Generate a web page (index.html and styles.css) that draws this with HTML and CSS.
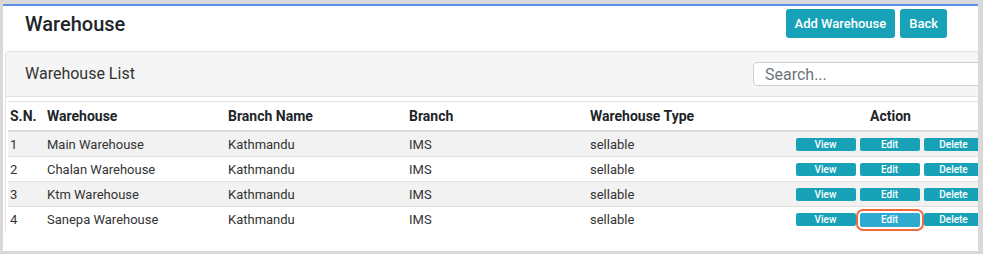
FILE: index.html
```html
<!DOCTYPE html>
<html>
<head>
<meta charset="utf-8">
<link rel="stylesheet" href="styles.css">
</head>
<body>
<div class="frame">
  <div class="page">
    <div class="page-head">
      <h1 class="title">Warehouse</h1>
      <div class="head-actions">
        <button class="btn">Add Warehouse</button>
        <button class="btn">Back</button>
      </div>
    </div>
    <div class="card">
      <div class="card-head">
        <span class="card-title">Warehouse List</span>
        <input class="search" type="text" placeholder="Search...">
      </div>
      <div class="card-body">
        <table class="grid">
          <colgroup>
            <col class="c-sn"><col class="c-mid"><col class="c-mid"><col class="c-mid"><col class="c-mid"><col class="c-act">
          </colgroup>
          <thead>
            <tr><th>S.N.</th><th>Warehouse</th><th>Branch Name</th><th>Branch</th><th>Warehouse Type</th><th class="center">Action</th></tr>
          </thead>
          <tbody>
            <tr><td>1</td><td>Main Warehouse</td><td>Kathmandu</td><td>IMS</td><td>sellable</td><td class="acts"><span class="sb">View</span><span class="sb">Edit</span><span class="sb">Delete</span></td></tr>
            <tr><td>2</td><td>Chalan Warehouse</td><td>Kathmandu</td><td>IMS</td><td>sellable</td><td class="acts"><span class="sb">View</span><span class="sb">Edit</span><span class="sb">Delete</span></td></tr>
            <tr><td>3</td><td>Ktm Warehouse</td><td>Kathmandu</td><td>IMS</td><td>sellable</td><td class="acts"><span class="sb">View</span><span class="sb">Edit</span><span class="sb">Delete</span></td></tr>
            <tr><td>4</td><td>Sanepa Warehouse</td><td>Kathmandu</td><td>IMS</td><td>sellable</td><td class="acts"><span class="sb">View</span><span class="ring"><span class="sb hot">Edit</span></span><span class="sb">Delete</span></td></tr>
          </tbody>
        </table>
      </div>
    </div>
  </div>
</div>
</body>
</html>
```
FILE: styles.css
```css
html, body {
  margin: 0;
  padding: 0;
  background: #d9d9d9;
  font-family: Roboto, "Liberation Sans", sans-serif;
  color: #333;
}
.frame {
  margin: 4px 0 0 3px;
  width: 975px;
  height: 245px;
  background: #fff;
  border-top: 2px solid #5d8fe8;
  overflow: hidden;
}
.page {
  width: 1040px;
}
.page-head {
  width: 975px;
  box-sizing: border-box;
  height: 45px;
  display: flex;
  justify-content: space-between;
  align-items: flex-start;
  padding: 3px 31px 0 22px;
}
.title {
  margin: 2px 0 0;
  font-size: 20px;
  font-weight: 500;
  color: #212529;
  line-height: 26px;
}
.head-actions {
  display: flex;
  gap: 5px;
}
.btn {
  height: 29px;
  padding: 0 9px;
  border: 0;
  border-radius: 3px;
  background: #18a2b7;
  color: #fff;
  font-family: Roboto, "Liberation Sans", sans-serif;
  font-size: 13px;
  font-weight: 500;
}
.card {
  margin-left: 2px;
  width: 1020px;
  border-top: 1px solid #e2e2e2;
  border-left: 1px solid #e2e2e2;
  border-radius: 4px 0 0 0;
}
.card-head {
  height: 44px;
  display: flex;
  align-items: center;
  justify-content: space-between;
  background: #f5f5f5;
  border-bottom: 1px solid #e3e3e3;
  padding: 0 20px 0 19px;
}
.card-title {
  font-size: 16px;
  color: #333;
  margin-top: -2px;
}
.search {
  width: 248px;
  height: 24px;
  box-sizing: border-box;
  border: 1px solid #cfcfcf;
  border-radius: 4px;
  padding: 0 11px;
  font-family: Roboto, "Liberation Sans", sans-serif;
  font-size: 16px;
  background: #fff;
  margin-right: 5px;
}
.search::placeholder {
  color: #6c757d;
}
.card-body {
  padding: 4px 0 0 2px;
}
.grid {
  border-collapse: collapse;
  width: 1002px;
  table-layout: fixed;
  font-size: 13px;
}
.c-sn { width: 37px; }
.c-mid { width: 181px; }
.c-act { width: 241px; }
.grid thead tr {
  border-top: 1px solid #e2e2e2;
  border-bottom: 2px solid #dcdcdc;
}
.grid th {
  text-align: left;
  font-size: 14px;
  font-weight: 700;
  color: #212529;
  height: 28px;
  padding: 0 0 0 2px;
}
.grid th.center {
  text-align: center;
}
.grid td {
  height: 24px;
  padding: 0 0 0 2px;
  border-top: 1px solid #e0e0e0;
  color: #333;
}
.grid tbody tr:nth-child(odd) td {
  background: #f2f2f2;
}
.grid tbody tr:first-child td {
  border-top: 0;
}
.grid td.acts {
  text-align: center;
  padding: 0;
  white-space: nowrap;
  font-size: 0;
}
.sb {
  display: inline-block;
  vertical-align: middle;
  width: 60px;
  height: 13px;
  line-height: 13px;
  margin: 0 2px;
  border-radius: 2px;
  background: #18a2b7;
  color: #fff;
  font-size: 10px;
  font-weight: 500;
  text-align: center;
}
.ring {
  display: inline-block;
  vertical-align: middle;
  border: 2px solid #f06a3d;
  border-radius: 7px;
  padding: 2px 0;
  margin: 2px -2px 0;
  font-size: 0;
}
.sb.hot {
  background: #2eaad0;
  height: 14px;
  line-height: 14px;
}
```
